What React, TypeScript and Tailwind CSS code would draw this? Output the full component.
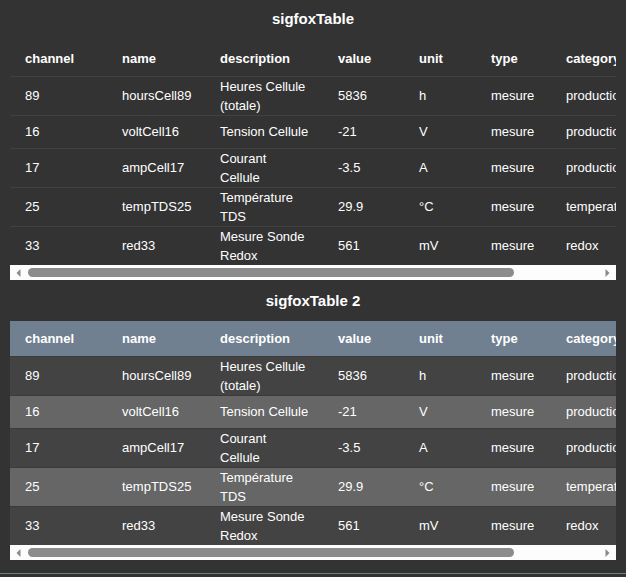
import React from 'react';

type Row = {
  channel: string;
  name: string;
  description: string[];
  value: string;
  unit: string;
  type: string;
  category: string;
  height: string;
};

const rows: Row[] = [
  { channel: '89', name: 'hoursCell89', description: ['Heures Cellule', '(totale)'], value: '5836', unit: 'h', type: 'mesure', category: 'production', height: 'h-[39px]' },
  { channel: '16', name: 'voltCell16', description: ['Tension Cellule'], value: '-21', unit: 'V', type: 'mesure', category: 'production', height: 'h-[33px]' },
  { channel: '17', name: 'ampCell17', description: ['Courant', 'Cellule'], value: '-3.5', unit: 'A', type: 'mesure', category: 'production', height: 'h-[38px]' },
  { channel: '25', name: 'tempTDS25', description: ['Température', 'TDS'], value: '29.9', unit: '°C', type: 'mesure', category: 'temperature', height: 'h-[39px]' },
  { channel: '33', name: 'red33', description: ['Mesure Sonde', 'Redox'], value: '561', unit: 'mV', type: 'mesure', category: 'redox', height: 'h-[39px]' },
];

const columns = ['channel', 'name', 'description', 'value', 'unit', 'type', 'category'];
const widths = ['w-[97px]', 'w-[98px]', 'w-[118px]', 'w-[81px]', 'w-[72px]', 'w-[75px]', 'w-[184px]'];

function Scrollbar() {
  return (
    <div className="ml-[10px] flex h-[15px] w-[606px] items-center bg-[#fdfdfd]">
      <svg className="ml-[6px]" width="5" height="8" viewBox="0 0 5 8">
        <path d="M4.5 0 L0.5 4 L4.5 8 Z" fill="#8a8a8a" />
      </svg>
      <div className="ml-[7px] h-[9px] w-[486px] rounded-full bg-[#8c8c8c]" />
      <svg className="ml-[91px]" width="5" height="8" viewBox="0 0 5 8">
        <path d="M0.5 0 L4.5 4 L0.5 8 Z" fill="#8a8a8a" />
      </svg>
    </div>
  );
}

function SigfoxTable({ striped }: { striped: boolean }) {
  return (
    <div className="ml-[10px] w-[606px] overflow-hidden">
      <table className="w-[725px] table-fixed border-collapse text-left text-[13px] text-white">
        <thead>
          <tr className={striped ? 'h-[35px] bg-[#708090]' : 'h-[35px]'}>
            {columns.map((c, i) => (
              <th key={c} className={`${widths[i]} pl-[15px] align-middle font-bold leading-[19px]`}>
                {c}
              </th>
            ))}
          </tr>
        </thead>
        <tbody>
          {rows.map((r, idx) => {
            const bg = striped ? (idx % 2 === 0 ? 'bg-[#434343]' : 'bg-[#666666]') : '';
            const line = striped ? 'border-[#3a3a3a]' : 'border-[#414141]';
            return (
              <tr key={r.channel} className={`${r.height} ${bg} border-t ${line}`}>
                <td className="pl-[15px] align-middle leading-[19px]">{r.channel}</td>
                <td className="pl-[15px] align-middle leading-[19px]">{r.name}</td>
                <td className="whitespace-nowrap pl-[15px] align-middle leading-[19px]">
                  {r.description.map((l) => (
                    <div key={l}>{l}</div>
                  ))}
                </td>
                <td className="pl-[15px] align-middle leading-[19px]">{r.value}</td>
                <td className="pl-[15px] align-middle leading-[19px]">{r.unit}</td>
                <td className="pl-[15px] align-middle leading-[19px]">{r.type}</td>
                <td className="whitespace-nowrap pl-[15px] align-middle leading-[19px]">{r.category}</td>
              </tr>
            );
          })}
        </tbody>
      </table>
    </div>
  );
}

export default function App() {
  return (
    <div className="h-[577px] w-[626px] overflow-hidden bg-[#333333] font-['Liberation_Sans',Arial,sans-serif]">
      <div className="h-[3px] overflow-hidden">
        <div className="mt-[-12px] flex text-[13px] leading-[14px]">
          <span className="ml-[10px] text-[#8a8f99]">devEUI</span>
          <span className="ml-[278px] text-[#8a8f99]">devEUI :</span>
          <span className="ml-[14px] font-bold text-white">2C4D4E4D4E4D4E4D4E4D</span>
        </div>
      </div>
      <div className="h-[38px] pt-[7px] text-center text-[15px] font-bold leading-[18px] text-white">sigfoxTable</div>
      <SigfoxTable striped={false} />
      <Scrollbar />
      <div className="h-[41px] pt-[12px] text-center text-[15px] font-bold leading-[18px] text-white">sigfoxTable 2</div>
      <SigfoxTable striped={true} />
      <Scrollbar />
      <div className="mt-[13px] h-px w-full bg-[#6b8283]" />
    </div>
  );
}
